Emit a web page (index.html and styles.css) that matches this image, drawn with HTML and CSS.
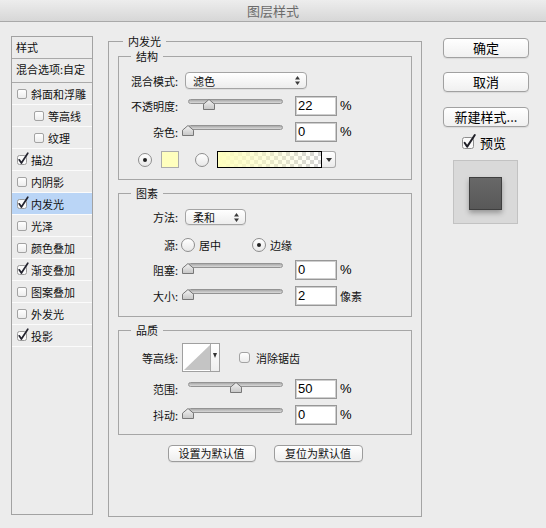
FILE: index.html
```html
<!DOCTYPE html>
<html lang="zh-CN">
<head>
<meta charset="utf-8">
<title>图层样式</title>
<link rel="stylesheet" href="styles.css">
</head>
<body>
<div class="window">
  <header class="titlebar">图层样式</header>
  <div class="content">
    <nav class="sidebar">
      <div class="side-head first">样式</div>
      <div class="side-head second">混合选项:自定</div>
      <div class="side-row"><span class="cb"></span><span class="txt">斜面和浮雕</span></div>
      <div class="side-row sub"><span class="cb"></span><span class="txt">等高线</span></div>
      <div class="side-row sub"><span class="cb"></span><span class="txt">纹理</span></div>
      <div class="side-row"><svg class="cbx" viewBox="0 0 10 10"><rect x=".5" y=".5" width="9" height="9" rx="2" fill="#fafafa" stroke="#9a9a9a"/><path d="M2.2 4.8 4.4 8 10.8-1.8" fill="none" stroke="#23232e" stroke-width="1.7" stroke-linecap="round" stroke-linejoin="round"/></svg><span class="txt">描边</span></div>
      <div class="side-row"><span class="cb"></span><span class="txt">内阴影</span></div>
      <div class="side-row active"><svg class="cbx" viewBox="0 0 10 10"><rect x=".5" y=".5" width="9" height="9" rx="2" fill="#fafafa" stroke="#9a9a9a"/><path d="M2.2 4.8 4.4 8 10.8-1.8" fill="none" stroke="#23232e" stroke-width="1.7" stroke-linecap="round" stroke-linejoin="round"/></svg><span class="txt">内发光</span></div>
      <div class="side-row"><span class="cb"></span><span class="txt">光泽</span></div>
      <div class="side-row"><span class="cb"></span><span class="txt">颜色叠加</span></div>
      <div class="side-row"><svg class="cbx" viewBox="0 0 10 10"><rect x=".5" y=".5" width="9" height="9" rx="2" fill="#fafafa" stroke="#9a9a9a"/><path d="M2.2 4.8 4.4 8 10.8-1.8" fill="none" stroke="#23232e" stroke-width="1.7" stroke-linecap="round" stroke-linejoin="round"/></svg><span class="txt">渐变叠加</span></div>
      <div class="side-row"><span class="cb"></span><span class="txt">图案叠加</span></div>
      <div class="side-row"><span class="cb"></span><span class="txt">外发光</span></div>
      <div class="side-row"><svg class="cbx" viewBox="0 0 10 10"><rect x=".5" y=".5" width="9" height="9" rx="2" fill="#fafafa" stroke="#9a9a9a"/><path d="M2.2 4.8 4.4 8 10.8-1.8" fill="none" stroke="#23232e" stroke-width="1.7" stroke-linecap="round" stroke-linejoin="round"/></svg><span class="txt">投影</span></div>
    </nav>

    <main class="main">
      <div class="legend main-legend">内发光</div>

      <section class="group g1">
        <div class="legend">结构</div>
        <div class="row r-blend">
          <span class="lbl">混合模式:</span>
          <div class="sel sel-blend"><span>滤色</span><svg class="updown" viewBox="0 0 5 9"><path d="M0 3.5 2.5 0 5 3.5Z M0 5.5 2.5 9 5 5.5Z" fill="#3a3a3a"/></svg></div>
        </div>
        <div class="row r-opacity">
          <span class="lbl">不透明度:</span>
          <div class="slider"><div class="track"></div><svg class="thumb" style="--v:22" viewBox="0 0 12 11"><defs><linearGradient id="tg" x1="0" y1="0" x2="0" y2="1"><stop offset="0" stop-color="#f4f4f4"/><stop offset="1" stop-color="#c6c6c6"/></linearGradient></defs><path d="M6 .5 11.5 5.2V10.5H.5V5.2Z" fill="url(#tg)" stroke="#777"/></svg></div>
          <span class="num">22</span><span class="unit">%</span>
        </div>
        <div class="row r-noise">
          <span class="lbl">杂色:</span>
          <div class="slider"><div class="track"></div><svg class="thumb" style="--v:0" viewBox="0 0 12 11"><path d="M6 .5 11.5 5.2V10.5H.5V5.2Z" fill="url(#tg)" stroke="#777"/></svg></div>
          <span class="num">0</span><span class="unit">%</span>
        </div>
        <div class="row r-color">
          <span class="radio on"></span>
          <span class="swatch"></span>
          <span class="radio r2"></span>
          <span class="grad"></span>
          <span class="gdrop"><span class="tri"></span></span>
        </div>
      </section>

      <section class="group g2">
        <div class="legend">图素</div>
        <div class="row r-method">
          <span class="lbl">方法:</span>
          <div class="sel sel-method"><span>柔和</span><svg class="updown" viewBox="0 0 5 9"><path d="M0 3.5 2.5 0 5 3.5Z M0 5.5 2.5 9 5 5.5Z" fill="#3a3a3a"/></svg></div>
        </div>
        <div class="row r-source">
          <span class="lbl">源:</span>
          <span class="radio src1"></span><span class="rtext">居中</span>
          <span class="radio on src2"></span><span class="rtext">边缘</span>
        </div>
        <div class="row r-choke">
          <span class="lbl">阻塞:</span>
          <div class="slider"><div class="track"></div><svg class="thumb" style="--v:0" viewBox="0 0 12 11"><path d="M6 .5 11.5 5.2V10.5H.5V5.2Z" fill="url(#tg)" stroke="#777"/></svg></div>
          <span class="num">0</span><span class="unit">%</span>
        </div>
        <div class="row r-size">
          <span class="lbl">大小:</span>
          <div class="slider"><div class="track"></div><svg class="thumb" style="--v:0" viewBox="0 0 12 11"><path d="M6 .5 11.5 5.2V10.5H.5V5.2Z" fill="url(#tg)" stroke="#777"/></svg></div>
          <span class="num">2</span><span class="unit-cjk">像素</span>
        </div>
      </section>

      <section class="group g3">
        <div class="legend">品质</div>
        <div class="row r-contour">
          <span class="lbl">等高线:</span>
          <div class="contour">
            <span class="curve"><svg viewBox="0 0 28 27" width="28" height="27"><path d="M1 26 27 1V26Z" fill="#c4c4c4"/></svg></span>
            <span class="cdrop"><span class="tri small"></span></span>
          </div>
          <span class="cb aa"></span><span class="aa-text">消除锯齿</span>
        </div>
        <div class="row r-range">
          <span class="lbl">范围:</span>
          <div class="slider"><div class="track"></div><svg class="thumb" style="--v:50" viewBox="0 0 12 11"><path d="M6 .5 11.5 5.2V10.5H.5V5.2Z" fill="url(#tg)" stroke="#777"/></svg></div>
          <span class="num">50</span><span class="unit">%</span>
        </div>
        <div class="row r-jitter">
          <span class="lbl">抖动:</span>
          <div class="slider"><div class="track"></div><svg class="thumb" style="--v:0" viewBox="0 0 12 11"><path d="M6 .5 11.5 5.2V10.5H.5V5.2Z" fill="url(#tg)" stroke="#777"/></svg></div>
          <span class="num">0</span><span class="unit">%</span>
        </div>
      </section>

      <div class="defaults">
        <button class="sbtn b1">设置为默认值</button>
        <button class="sbtn b2">复位为默认值</button>
      </div>
    </main>

    <aside class="actions">
      <button class="btn">确定</button>
      <button class="btn">取消</button>
      <button class="btn b-new">新建样式...</button>
      <div class="preview-check">
        <svg class="pcb" viewBox="0 0 12 12"><rect x=".5" y=".5" width="11" height="11" rx="2" fill="#fafafa" stroke="#8e8e8e"/><path d="M2.6 5.8 5.2 9.6 12.8-2" fill="none" stroke="#1f1f27" stroke-width="2" stroke-linecap="round" stroke-linejoin="round"/></svg>
        <span class="ptext">预览</span>
      </div>
      <div class="preview"><div class="psq"></div></div>
    </aside>
  </div>
</div>
</body>
</html>
```

FILE: styles.css
```css
* { box-sizing: border-box; }
html, body { margin: 0; padding: 0; }
body {
  background: #ececec;
  font-family: "Noto Sans CJK SC", "Liberation Sans", sans-serif;
  font-size: 11px;
  line-height: 14px;
  color: #111;
}
.window { width: 546px; height: 528px; background: #ececec; overflow: hidden; }
.titlebar {
  height: 22px;
  border-bottom: 1px solid #a9a9a9;
  background: linear-gradient(#ededed, #d7d7d7);
  text-align: center;
  font-size: 13px;
  line-height: 21px;
  color: #6b6b6b;
}
.content { display: flex; align-items: flex-start; padding-left: 11px; }

/* sidebar */
.sidebar { width: 82px; height: 479px; margin-top: 14px; border: 1px solid #a2a2a2; flex: none; }
.side-head { border-bottom: 1px solid #a9a9a9; padding: 3px 0 0 4px; line-height: 14px; }
.side-head.first { height: 22px; }
.side-head.second { height: 24px; }
.side-row { display: flex; align-items: center; height: 22px; border-bottom: 1px solid #fbfbfb; padding-left: 5px; }
.side-row.sub { padding-left: 22px; }
.side-row.active { background: #bad5f6; }
.side-row .txt { margin-left: 4px; }
.cb {
  width: 10px; height: 10px; flex: none;
  border: 1px solid #a3a3a3; border-radius: 2px;
  background: linear-gradient(#fff, #ececec);
}
.cbx { width: 10px; height: 10px; overflow: visible; flex: none; }

/* main panel */
.main {
  width: 314px; height: 476px; flex: none;
  margin: 19px 0 0 15px;
  border: 1px solid #a4a4a4;
  padding: 0 9px;
}
.legend {
  width: max-content;
  height: 12px; line-height: 12px;
  margin: -7px 0 0 12px;
  padding: 0 5px;
  background: #ececec;
}
.main-legend { margin-left: 5px; }
.group { border: 1px solid #a6a6a6; }
.g1 { margin-top: 9px; padding-bottom: 11px; }
.g2 { margin-top: 13px; padding-bottom: 10px; }
.g3 { margin-top: 13px; padding-bottom: 9px; }

.row { display: flex; align-items: center; }
.lbl { width: 59px; flex: none; text-align: right; line-height: 14px; }

.r-blend { margin-top: 10px; height: 17px; }
.r-opacity { margin-top: 7px; height: 20px; }
.r-noise { margin-top: 6px; height: 20px; }
.r-color { margin-top: 9px; height: 17px; padding-left: 19px; }
.r-method { margin-top: 10px; height: 16px; }
.r-source { margin-top: 13px; height: 14px; }
.r-choke { margin-top: 8px; height: 20px; }
.r-size { margin-top: 6px; height: 20px; }
.r-contour { margin-top: 7px; height: 29px; }
.r-range { margin-top: 7px; height: 20px; }
.r-jitter { margin-top: 6px; height: 20px; }

.sel {
  display: flex; align-items: center; justify-content: space-between;
  height: 17px; margin-left: 7px; padding: 0 6px 0 7px;
  border: 1px solid #a4a4a4; border-radius: 4px;
  background: linear-gradient(#fff, #ededed);
  box-shadow: 0 1px 0 rgba(0, 0, 0, .06);
  line-height: 14px;
}
.sel-blend { width: 122px; }
.sel-method { width: 61px; height: 16px; }
.updown { width: 5px; height: 9px; }

.slider { position: relative; width: 95px; height: 20px; margin-left: 10px; flex: none; align-self: flex-start; }
.track {
  margin-top: 3px; height: 5px;
  border: 1px solid #939393; border-radius: 3px;
  background: linear-gradient(#aaaaaa, #d9d9d9);
}
.thumb { position: absolute; top: 3px; left: calc(var(--v) * 0.96px - 6px); width: 12px; height: 11px; }
.num {
  width: 42px; height: 20px; flex: none; margin-left: 12px; padding-left: 2px;
  border: 1px solid #979797;
  box-shadow: inset 0 0 0 1px #cecece;
  background: #fff;
  font: 13px/18px "Liberation Sans", sans-serif;
  color: #000;
}
.unit { margin-left: 3px; font: 13px/20px "Liberation Sans", sans-serif; color: #000; }
.unit-cjk { margin-left: 3px; }

.radio {
  width: 14px; height: 14px; flex: none;
  border: 1px solid #8e8e8e; border-radius: 50%;
  background: linear-gradient(#fff, #e8e8e8);
  display: flex; align-items: center; justify-content: center;
}
.radio.on::after { content: ""; width: 4px; height: 4px; border-radius: 50%; background: #222; }
.swatch { width: 18px; height: 17px; margin-left: 9px; border: 1px solid #acacac; background: #ffffbe; flex: none; }
.r2 { margin-left: 16px; }
.grad {
  width: 105px; height: 17px; margin-left: 8px; flex: none;
  border: 1px solid #000;
  background:
    linear-gradient(to right, #ffffbe, rgba(255, 255, 190, 0)),
    conic-gradient(#d4d4d4 25%, #fff 0 50%, #d4d4d4 0 75%, #fff 0) 0 0 / 8px 8px;
}
.gdrop {
  width: 14px; height: 17px; flex: none;
  border: 1px solid #a9a9a9; border-left: 0; border-radius: 0 3px 3px 0;
  background: linear-gradient(#fff, #ebebeb);
  display: flex; align-items: center; justify-content: center;
}
.tri { width: 0; height: 0; border-left: 3px solid transparent; border-right: 3px solid transparent; border-top: 4px solid #333; }
.tri.small { border-left-width: 2px; border-right-width: 2px; border-top-width: 5px; }

.src1 { margin-left: 3px; }
.src2 { margin-left: 31px; }
.rtext { margin-left: 4px; }

.contour {
  display: flex; width: 38px; height: 29px; margin-left: 4px; flex: none;
  border: 1px solid #a0a0a0;
  background: linear-gradient(#fff, #eeeeee);
}
.curve { width: 28px; height: 27px; background: #fff; border-right: 1px solid #a9a9a9; display: block; }
.curve svg { display: block; }
.cdrop { flex: 1; display: flex; justify-content: center; padding-top: 9px; }
.cb.aa { width: 11px; height: 11px; margin-left: 19px; border-radius: 3px; }
.aa-text { margin-left: 6px; }

.defaults { display: flex; justify-content: center; gap: 18px; margin-top: 10px; }
.sbtn {
  height: 17px; padding: 0;
  border: 1px solid #9c9c9c; border-radius: 4px;
  background: linear-gradient(#fff, #eeeeee);
  box-shadow: 0 1px 0 rgba(0, 0, 0, .06);
  font-family: "Noto Sans CJK SC", "Liberation Sans", sans-serif;
  font-size: 11px; line-height: 15px; color: #111;
}
.b1 { width: 88px; }
.b2 { width: 89px; }

/* right column */
.actions { width: 86px; flex: none; margin: 16px 0 0 21px; }
.btn {
  display: block; width: 86px; height: 20px; padding: 0;
  border: 1px solid #a1a1a1; border-radius: 4px;
  background: linear-gradient(#fff, #f0f0f0);
  box-shadow: 0 1px 1px rgba(0, 0, 0, .08);
  font-family: "Noto Sans CJK SC", "Liberation Sans", sans-serif;
  font-size: 13px; line-height: 18px; color: #000;
}
.btn + .btn { margin-top: 14px; }
.btn.b-new { margin-top: 15px; }
.preview-check { display: flex; align-items: center; height: 12px; margin-top: 10px; padding-left: 19px; }
.pcb { width: 12px; height: 12px; overflow: visible; flex: none; }
.ptext { margin-left: 6px; font-size: 13px; line-height: 14px; color: #000; }
.preview {
  width: 65px; height: 64px; margin: 11px 0 0 10px;
  border: 1px solid #c2c2c2;
  background: #d9d9d9;
  padding: 16px 0 0 15px;
}
.psq {
  width: 33px; height: 33px;
  border: 1px solid #3f3f3f;
  background: linear-gradient(#686868, #585858);
  box-shadow: 0 3px 5px rgba(0, 0, 0, .3);
}
```
